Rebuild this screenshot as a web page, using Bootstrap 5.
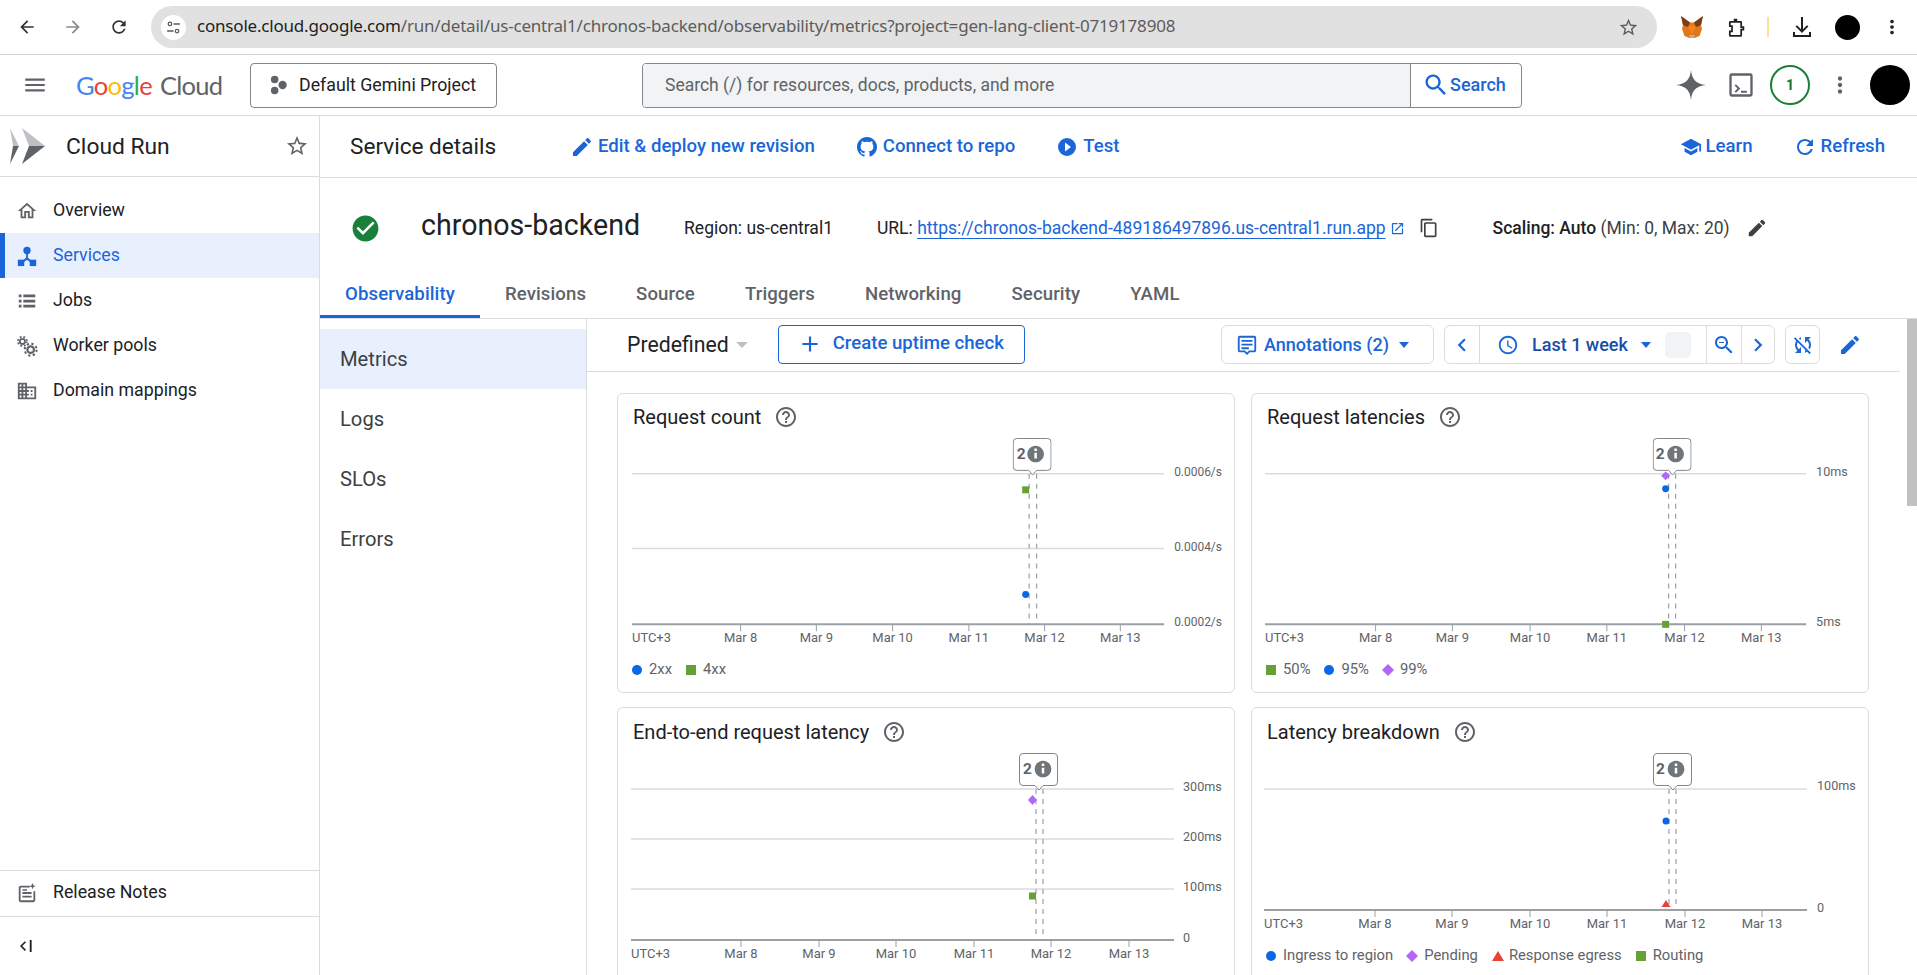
<!DOCTYPE html>
<html lang="en">
<head>
<meta charset="utf-8">
<title>chronos-backend – Cloud Run</title>
<link href="https://cdn.jsdelivr.net/npm/bootstrap@5.3.0/dist/css/bootstrap.min.css" rel="stylesheet">
<style>
html,body{height:975px;overflow:hidden;background:#fff}
body{font-family:Roboto,"Liberation Sans",sans-serif;color:#202124;font-size:17.75px;line-height:1.2}
.ico{display:block;flex:none;fill:currentColor}
.symbols{display:none}
.c-blue{color:#1a66d8}.c-gray{color:#5f6368}.c-dark{color:#3c4043}.c-green{color:#188038}
.browserbar{height:55px;border-bottom:1px solid #d3d3d3;padding-left:17px}
.bb-btn{width:20px;height:20px;margin-right:26px;color:#333}
.bb-btn.dim{color:#8a8a8a}
.omni{width:1506px;height:42px;margin-left:-4px;background:#e1e1e1;border-radius:21px;padding:0 18px 0 10px;font-family:"Noto Sans",sans-serif;font-size:17px;color:#5c5c5c}
.omni b{font-weight:400;color:#222}
.site-chip{width:25px;height:25px;border-radius:50%;background:#fff;margin-right:11px;flex:none}
.omni-url{flex:1;white-space:nowrap;letter-spacing:-.2px;position:relative;top:-1px}
.ext{margin-left:21px}
.ext-fox{margin-left:23px}
.ybar{width:2px;height:20px;background:#fde293;margin-left:21px}
.dot-av{width:25px;height:25px;border-radius:50%;background:#000}
.gc-head{height:61px;border-bottom:1px solid #dadce0;padding-left:22px}
.logo-t{width:166px;margin-left:28px;margin-right:-1px;font-family:Lato,"Open Sans",sans-serif;font-size:25.5px;letter-spacing:-.7px;white-space:nowrap}
.lg-b{color:#4285f4}.lg-r{color:#ea4335}.lg-y{color:#fbbc05}.lg-g{color:#34a853}
.lg-c{color:#5f6368;margin-left:8px;font-weight:400}
.proj{width:247px;height:45px;border:1px solid #80868b;border-radius:4px;margin-left:9px;padding:0 0 0 17px;color:#202124;font-size:17.75px;background:#fff;gap:11px}
.srch{width:880px;height:45px;margin-left:145px;border:1px solid #80868b;border-radius:4px;overflow:hidden}
.srch-in{width:768px;height:100%;background:#f1f3f4;border-right:1px solid #80868b;padding-left:22px;color:#5f6368;flex:none;font-size:17.5px}
.srch-b{flex:1;padding-left:11px;color:#1a66d8;font-weight:500;gap:0;font-size:18px}
.gc-r{margin-left:154px}
.ml-term{margin-left:21px}.ml-badge{margin-left:15px}.ml-more{margin-left:17px}
.badge1{width:40px;height:40px;border:2px solid #188038;border-radius:50%;color:#137333;font-size:14px;font-weight:700}
.avatar{width:40px;height:40px;border-radius:50%;background:#000}
.shell{height:859px}
.side{width:320px;border-right:1px solid #dadce0;flex:none}
.side-h{height:61px;border-bottom:1px solid #dadce0;padding:0 10px 0 9px}
.side-h h1{font-size:22.8px;font-weight:400;margin:0 0 0 21px;flex:1;line-height:1;position:relative;top:1px}
.side-nav{padding-top:11px}
.side-l{height:45px;padding:0 0 0 16px;color:#202124;gap:15px}
.side-l svg{color:#5f6368}
.side-l.on{background:#e8f0fe;color:#1a66d8;box-shadow:inset 5px 0 0 #1a66d8}
.side-l.on svg{color:#1a66d8}
.side-f{border-top:1px solid #dadce0;height:46px;padding:0 0 2px 16px;gap:15px}
.side-c{border-top:1px solid #dadce0;height:59px;padding-left:17px}
.mainw{min-width:0;flex:1}
.m-head{height:62px;border-bottom:1px solid #dadce0;padding:0 32px 0 30px}
.m-head h2{font-size:22.6px;font-weight:400;margin:0;width:220px}
.act{color:#1a66d8;font-weight:500;text-decoration:none;gap:4px;font-size:18.6px}
.act+.act{margin-left:40px}
.act.ms-auto{margin-left:auto}
.inf{height:92px;padding:8px 0 0 30px;font-size:17.5px}
.inf h3{font-size:28.6px;font-weight:400;margin:0 44px 0 40px;line-height:1;position:relative;top:-3px}
.url-w{margin-left:44px}
.scal{margin-left:54px}
.cp{margin-left:14px}
.url{color:#1a66d8;text-decoration:underline;text-underline-offset:4px}
.tabsx{height:49px;border-bottom:1px solid #dadce0;flex-wrap:nowrap}
.tabx{padding:0 25px;height:48px;color:#5f6368;font-weight:500;font-size:18.6px;letter-spacing:.1px;display:flex;align-items:center;border-radius:0}
.tabx.on{color:#1a66d8;box-shadow:inset 0 -3px 0 #1a66d8}
.bodyw{height:656px}
.subn{width:267px;border-right:1px solid #dadce0;padding-top:10px;flex:none}
.subl{height:60px;padding:0 20px;color:#3c4043;font-size:20.2px;display:flex;align-items:center}
.subl.on{background:#e8f0fe}
.met{width:1313px;flex:none}
.tbar{height:53px;border-bottom:1px solid #dadce0;padding:0 38px 1px 40px}
.pred{font-size:21.25px;color:#202124}
.caret-g{width:0;height:0;border:6px solid transparent;border-top:6px solid #bdc1c6;border-bottom:0;margin-left:7px}
.caret-b{width:0;height:0;border:5.5px solid transparent;border-top:6px solid #1a66d8;border-bottom:0}
.btn-up{width:247px;height:39px;border:1px solid #1a66d8;border-radius:4px;margin-left:30px;color:#1a66d8;font-weight:500;font-size:18.6px;padding:0 0 1px 18px;gap:10px;background:#fff}
.tb-box{height:39px;border:1px solid #dadce0;border-radius:6px;color:#1a66d8;background:#fff}
.tb-ann{width:213px;margin-left:auto;padding-left:14px;font-weight:500;gap:6px;font-size:18px}
.tb-grp{width:331px;margin-left:10px}
.tb-cell{height:100%;border-right:1px solid #dadce0}
.cw35{width:35px}
.cw227{width:227px;padding-left:17px}
.lastw{margin-left:13px;color:#174ea6;font-weight:500;font-size:18px}
.m-cb{margin-left:13px}
.gray-sq{width:26px;height:26px;border-radius:5px;background:#f1f3f4;margin-left:14px}
.tb-off{width:35px;margin-left:10px}
.tb-pen{margin-left:18px}
.grid2{display:grid;grid-template-columns:618px 618px;column-gap:16px;row-gap:14px;padding:21px 0 0 30px}
.chart{border:1px solid #dadce0;border-radius:6px;height:300px;width:618px;overflow:hidden}
.chart-t{height:42px;padding:5px 0 0 15px;font-size:20px;color:#202124;gap:13px}
.chart svg.plot{display:block;width:616px}
.chart text{font-family:Roboto,sans-serif;font-size:13px;fill:#5f6368}
.chart text.b2{font-size:15.5px;font-weight:700;fill:#5f6368}
.chart text.yl{font-size:12.6px}
.chart text.yr{font-size:12px}
.lgd{padding:0 0 0 14px;font-size:14.8px;color:#5f6368;height:44px;gap:4px}
.lgd span{margin-right:10px}
.mk{width:10px;height:10px;flex:none;margin-right:3px}
.m-c{border-radius:50%;background:#0b67e3}
.m-s{background:#65a135}
.m-d{background:#b366f5;transform:rotate(45deg) scale(.85)}
.m-t{width:0;height:0;border:6.5px solid transparent;border-bottom:10px solid #ea4335;border-top:0;flex:none;margin-right:1px}
.thumbw{flex:1;padding-left:7px}
.thumb{width:10px;height:187px;background:#c1c1c1}
</style>
</head>
<body>
<svg class="symbols" xmlns="http://www.w3.org/2000/svg">
<symbol id="i-back" viewBox="0 0 24 24"><path d="M20 11H7.83l5.59-5.59L12 4l-8 8 8 8 1.41-1.41L7.83 13H20v-2z"/></symbol>
<symbol id="i-fwd" viewBox="0 0 24 24"><path d="M12 4l-1.41 1.41L16.17 11H4v2h12.17l-5.58 5.59L12 20l8-8z"/></symbol>
<symbol id="i-reload" viewBox="0 0 24 24"><path d="M17.65 6.35C16.2 4.9 14.21 4 12 4c-4.42 0-7.99 3.58-7.99 8s3.57 8 7.99 8c3.73 0 6.84-2.55 7.73-6h-2.08c-.82 2.33-3.04 4-5.65 4-3.31 0-6-2.69-6-6s2.69-6 6-6c1.66 0 3.14.69 4.22 1.78L13 11h7V4l-2.35 2.35z"/></symbol>
<symbol id="i-star" viewBox="0 0 24 24"><path d="M22 9.24l-7.19-.62L12 2 9.19 8.63 2 9.24l5.46 4.73L5.82 21 12 17.27 18.18 21l-1.63-7.03L22 9.24zM12 15.4l-3.76 2.27 1-4.28-3.32-2.88 4.38-.38L12 6.1l1.71 4.04 4.38.38-3.32 2.88 1 4.28L12 15.4z"/></symbol>
<symbol id="i-menu" viewBox="0 0 24 24"><path d="M3 18h18v-2H3v2zm0-5h18v-2H3v2zm0-7v2h18V6H3z"/></symbol>
<symbol id="i-search" viewBox="0 0 24 24"><path d="M15.5 14h-.79l-.28-.27C15.41 12.59 16 11.11 16 9.5 16 5.91 13.09 3 9.5 3S3 5.91 3 9.5 5.91 16 9.5 16c1.61 0 3.09-.59 4.23-1.57l.27.28v.79l5 4.99L20.49 19l-4.99-5zm-6 0C7.01 14 5 11.99 5 9.5S7.01 5 9.5 5 14 7.01 14 9.5 11.99 14 9.5 14z"/></symbol>
<symbol id="i-more" viewBox="0 0 24 24"><path d="M12 8c1.1 0 2-.9 2-2s-.9-2-2-2-2 .9-2 2 .9 2 2 2zm0 2c-1.1 0-2 .9-2 2s.9 2 2 2 2-.9 2-2-.9-2-2-2zm0 6c-1.1 0-2 .9-2 2s.9 2 2 2 2-.9 2-2-.9-2-2-2z"/></symbol>
<symbol id="i-edit" viewBox="0 0 24 24"><path d="M3 17.25V21h3.75L17.81 9.94l-3.75-3.75L3 17.25zM20.71 7.04c.39-.39.39-1.02 0-1.41l-2.34-2.34c-.39-.39-1.02-.39-1.41 0l-1.83 1.83 3.75 3.75 1.83-1.83z"/></symbol>
<symbol id="i-gh" viewBox="0 0 24 24"><path d="M12 2C6.48 2 2 6.48 2 12c0 4.42 2.87 8.17 6.84 9.5.5.08.66-.23.66-.5v-1.69c-2.77.6-3.36-1.34-3.36-1.34-.46-1.16-1.11-1.47-1.11-1.47-.91-.62.07-.6.07-.6 1 .07 1.53 1.03 1.53 1.03.87 1.52 2.34 1.07 2.91.83.09-.65.35-1.09.63-1.34-2.22-.25-4.55-1.11-4.55-4.92 0-1.11.38-2 1.03-2.71-.1-.25-.45-1.29.1-2.64 0 0 .84-.27 2.75 1.02.79-.22 1.65-.33 2.5-.33s1.71.11 2.5.33c1.91-1.29 2.75-1.02 2.75-1.02.55 1.35.2 2.39.1 2.64.65.71 1.03 1.6 1.03 2.71 0 3.82-2.34 4.66-4.57 4.91.36.31.69.92.69 1.85V21c0 .27.16.59.67.5C19.14 20.16 22 16.42 22 12c0-5.52-4.48-10-10-10z"/></symbol>
<symbol id="i-play" viewBox="0 0 24 24"><path d="M12 3a9 9 0 100 18 9 9 0 000-18zm-2 13.500v-9l6 4.500-6 4.500z"/></symbol>
<symbol id="i-learn" viewBox="0 0 24 24"><path d="M5 13.18v4L12 21l7-3.82v-4L12 17l-7-3.82zM12 3L1 9l11 6 9-4.91V17h2V9L12 3z"/></symbol>
<symbol id="i-home" viewBox="0 0 24 24"><path d="M12 5.69l5 4.5V18h-2v-6H9v6H7v-7.81l5-4.5M12 3L2 12h3v8h6v-6h2v6h6v-8h3L12 3z"/></symbol>
<symbol id="i-svc" viewBox="0 0 24 24"><circle cx="12" cy="6" r="4"/><rect x="2" y="16" width="7" height="7"/><rect x="15" y="16" width="7" height="7"/><path d="M11 9h2v5l5 4-1.3 1.6L12 16l-4.7 3.6L6 18l5-4z"/></symbol>
<symbol id="i-jobs" viewBox="0 0 24 24"><path d="M3 5h3v3H3zM8 5h13v3H8zM3 10.500h3v3H3zM8 10.500h13v3H8zM3 16h3v3H3zM8 16h13v3H8z"/></symbol>
<symbol id="i-gears" viewBox="0 0 24 24"><circle cx="7" cy="7" r="2.800" fill="none" stroke="currentColor" stroke-width="2"/><circle cx="7" cy="7" r="5" fill="none" stroke="currentColor" stroke-width="1.800" stroke-dasharray="2 2"/><circle cx="16" cy="16" r="3.600" fill="none" stroke="currentColor" stroke-width="2.400"/><circle cx="16" cy="16" r="6.500" fill="none" stroke="currentColor" stroke-width="2.200" stroke-dasharray="2.500 2.600"/></symbol>
<symbol id="i-dom" viewBox="0 0 24 24"><path d="M12 7V3H2v18h20V7H12zM6 19H4v-2h2v2zm0-4H4v-2h2v2zm0-4H4V9h2v2zm0-4H4V5h2v2zm4 12H8v-2h2v2zm0-4H8v-2h2v2zm0-4H8V9h2v2zm0-4H8V5h2v2zm10 12h-8v-2h2v-2h-2v-2h2v-2h-2V9h8v10zm-2-8h-2v2h2v-2zm0 4h-2v2h2v-2z"/></symbol>
<symbol id="i-check" viewBox="0 0 24 24"><path d="M12 2C6.48 2 2 6.48 2 12s4.48 10 10 10 10-4.48 10-10S17.52 2 12 2zm-2 15l-5-5 1.41-1.41L10 14.17l7.59-7.59L19 8l-9 9z"/></symbol>
<symbol id="i-open" viewBox="0 0 24 24"><path d="M19 19H5V5h7V3H5c-1.11 0-2 .9-2 2v14c0 1.1.89 2 2 2h14c1.1 0 2-.9 2-2v-7h-2v7zM14 3v2h3.590l-9.830 9.830 1.410 1.410L19 6.410V10h2V3h-7z"/></symbol>
<symbol id="i-copy" viewBox="0 0 24 24"><path d="M16 1H4c-1.100 0-2 .9-2 2v14h2V3h12V1zm3 4H8c-1.100 0-2 .9-2 2v14c0 1.100.9 2 2 2h11c1.100 0 2-.9 2-2V7c0-1.100-.9-2-2-2zm0 16H8V7h11v14z"/></symbol>
<symbol id="i-help" viewBox="0 0 24 24"><path d="M11 18h2v-2h-2v2zm1-16C6.480 2 2 6.480 2 12s4.480 10 10 10 10-4.480 10-10S17.520 2 12 2zm0 18c-4.410 0-8-3.590-8-8s3.590-8 8-8 8 3.590 8 8-3.590 8-8 8zm0-14c-2.210 0-4 1.790-4 4h2c0-1.100.9-2 2-2s2 .9 2 2c0 2-3 1.750-3 5h2c0-2.250 3-2.500 3-5 0-2.210-1.790-4-4-4z"/></symbol>
<symbol id="i-info" viewBox="0 0 24 24"><path fill-rule="evenodd" d="M12 2C6.480 2 2 6.480 2 12s4.480 10 10 10 10-4.480 10-10S17.520 2 12 2zm1.500 15.500h-3v-7h3v7zm0-9h-3v-3h3v3z"/></symbol>
<symbol id="i-clock" viewBox="0 0 24 24"><path d="M11.990 2C6.470 2 2 6.480 2 12s4.470 10 9.990 10C17.520 22 22 17.520 22 12S17.520 2 11.990 2zM12 20c-4.420 0-8-3.580-8-8s3.580-8 8-8 8 3.580 8 8-3.580 8-8 8zm.5-13H11v6l5.250 3.150.75-1.230-4.500-2.670z"/></symbol>
<symbol id="i-zoomo" viewBox="0 0 24 24"><path d="M15.500 14h-.79l-.28-.27C15.410 12.590 16 11.110 16 9.500 16 5.910 13.090 3 9.500 3S3 5.910 3 9.500 5.910 16 9.500 16c1.610 0 3.090-.59 4.230-1.570l.27.28v.79l5 4.990L20.490 19l-4.990-5zm-6 0C7.010 14 5 11.990 5 9.500S7.010 5 9.500 5 14 7.010 14 9.500 11.990 14 9.500 14zM7 9h5v1H7z"/></symbol>
<symbol id="i-left" viewBox="0 0 24 24"><path d="M15.410 7.410L14 6l-6 6 6 6 1.410-1.410L10.830 12z"/></symbol>
<symbol id="i-right" viewBox="0 0 24 24"><path d="M10 6L8.590 7.410 13.170 12l-4.580 4.590L10 18l6-6z"/></symbol>
<symbol id="i-add" viewBox="0 0 24 24"><path d="M19 13h-6v6h-2v-6H5v-2h6V5h2v6h6v2z"/></symbol>
<symbol id="i-syncoff" viewBox="0 0 24 24"><path d="M10 6.350V4.260c-.8.21-1.550.54-2.230.96l1.460 1.460c.25-.12.5-.24.77-.33zm-7.140-.94l2.360 2.360C4.450 8.990 4 10.440 4 12c0 2.210.91 4.200 2.360 5.640L4 20h6v-6l-2.240 2.240C6.680 15.150 6 13.660 6 12c0-1 .25-1.940.68-2.770l8.080 8.080c-.25.13-.5.25-.77.34v2.090c.8-.21 1.550-.54 2.230-.96l2.360 2.360 1.270-1.270L4.140 4.140 2.860 5.410zM20 4h-6v6l2.240-2.240C17.320 8.850 18 10.340 18 12c0 1-.25 1.940-.68 2.770l1.460 1.460C19.550 15.010 20 13.560 20 12c0-2.210-.91-4.200-2.360-5.640L20 4z"/></symbol>
<symbol id="i-ann" viewBox="0 0 24 24"><path d="M4 2h16a2 2 0 012 2v14a2 2 0 01-2 2h-5l-3 3-3-3H4a2 2 0 01-2-2V4a2 2 0 012-2zm0 2v14h5.800l2.200 2.200 2.200-2.200H20V4H4zm2 2.500h12v2H6zm0 4h12v2H6zm0 4h8v2H6z"/></symbol>
<symbol id="i-term" viewBox="0 0 24 24"><path d="M4 2h16a2 2 0 012 2v16a2 2 0 01-2 2H4a2 2 0 01-2-2V4a2 2 0 012-2zm0 2v16h16V4H4zm2.500 8.500l1.200-1.200 3.700 3.700-3.700 3.700-1.200-1.200 2.500-2.500zM12 17h5v1.700h-5z"/></symbol>
<symbol id="i-spark" viewBox="0 0 24 24"><path d="M12 0C12.700 7.500 16 11.200 24 12 16 12.800 12.700 16.500 12 24 11.300 16.500 8 12.800 0 12 8 11.200 11.300 7.500 12 0z"/></symbol>
<symbol id="i-puzzle" viewBox="0 0 24 24"><path d="M10 2h4v2.500h4a1.500 1.500 0 011.500 1.500v4.500H22v5h-2.500V21a1.500 1.500 0 01-1.500 1.500H6A1.500 1.500 0 014.500 21v-5.500H7v-4H4.500V6A1.500 1.500 0 016 4.500h4zm-3.500 4.500v3h2.500v8H6.500v3h11v-7H20v-1h-2.500v-6z"/></symbol>
<symbol id="i-dl" viewBox="0 0 24 24"><path d="M11 2h2v12.200l4-4 1.400 1.400L12 18l-6.400-6.400L7 10.200l4 4zM3 17h2v3h14v-3h2v5H3z"/></symbol>
<symbol id="i-notes" viewBox="0 0 24 24"><path d="M5 4h10v2H5v14h14V10h2v10a2 2 0 01-2 2H5a2 2 0 01-2-2V6a2 2 0 012-2zm2 7h10v2H7zm0 4h10v2H7zm0-7h5v1.500H7zM18 1l1 2.500 2.500 1-2.500 1L18 8l-1-2.500-2.500-1 2.500-1z"/></symbol>
<symbol id="i-coll" viewBox="0 0 24 24"><path d="M10.500 5.500L12 7l-5 5 5 5-1.500 1.500L4 12zM17 4h2.500v16H17z"/></symbol>
<symbol id="i-tune" viewBox="0 0 24 24"><circle cx="7" cy="7" r="2.500" fill="none" stroke="currentColor" stroke-width="1.800"/><path d="M12 6h9v2h-9zM3 16h9v2H3z"/><circle cx="17" cy="17" r="2.500" fill="none" stroke="currentColor" stroke-width="1.800"/></symbol>
<symbol id="i-proj" viewBox="0 0 24 24"><circle cx="8" cy="5.500" r="4.500"/><circle cx="8" cy="18.500" r="4.500"/><circle cx="17.500" cy="12" r="5"/></symbol>
<symbol id="i-fox" viewBox="0 0 24 24"><path fill="#e2761b" d="M1 1l9 6.500h4L23 1l-2 9 1 4-2.500 7-5 2h-5l-5-2L2 14l1-4z"/><path fill="#763d16" d="M1 1l9 6.500L8 12l-5-2zM23 1l-9 6.500 2 4.500 5-2z"/><path fill="#f6851b" d="M8 12l4 7 4-7-4-2z"/><path fill="#c0ad9e" d="M9 20h6l-1 3h-4z"/></symbol>
<symbol id="i-bub" viewBox="0 0 39 38"><path d="M4 .5H35A3.500 3.500 0 0138.500 4V29A3.500 3.500 0 0135 32.500H24L20 37 16 32.500H4A3.500 3.500 0 01.5 29V4A3.500 3.500 0 014 .5z" fill="#fff" stroke="#80868b"/></symbol>
</svg>

<header class="browserbar d-flex align-items-center">
  <svg class="ico bb-btn" aria-hidden="true"><use href="#i-back"/></svg>
  <svg class="ico bb-btn dim" aria-hidden="true"><use href="#i-fwd"/></svg>
  <svg class="ico bb-btn" aria-hidden="true"><use href="#i-reload"/></svg>
  <div class="omni d-flex align-items-center">
    <span class="site-chip d-flex align-items-center justify-content-center"><svg class="ico" width="17" height="17" aria-hidden="true"><use href="#i-tune"/></svg></span>
    <span class="omni-url"><b>console.cloud.google.com</b>/run/detail/us-central1/chronos-backend/observability/metrics?project=gen-lang-client-0719178908</span>
    <svg class="ico" width="21" height="21" aria-hidden="true"><use href="#i-star"/></svg>
  </div>
  <svg class="ico ext-fox" width="24" height="24" aria-hidden="true"><use href="#i-fox"/></svg>
  <svg class="ico ext" width="21" height="21" aria-hidden="true"><use href="#i-puzzle"/></svg>
  <span class="ybar"></span>
  <svg class="ico ext" width="24" height="24" aria-hidden="true"><use href="#i-dl"/></svg>
  <span class="dot-av ext"></span>
  <svg class="ico ext" width="22" height="22" aria-hidden="true"><use href="#i-more"/></svg>
</header>

<header class="gc-head d-flex align-items-center">
  <svg class="ico c-gray" width="26" height="26" aria-hidden="true"><use href="#i-menu"/></svg>
  <div class="logo-t"><span class="lg-b">G</span><span class="lg-r">o</span><span class="lg-y">o</span><span class="lg-b">g</span><span class="lg-g">l</span><span class="lg-r">e</span><span class="lg-c">Cloud</span></div>
  <button type="button" class="btn proj d-flex align-items-center"><svg class="ico c-gray" width="20" height="20" aria-hidden="true"><use href="#i-proj"/></svg>Default Gemini Project</button>
  <div class="srch d-flex align-items-center">
    <div class="srch-in d-flex align-items-center">Search (/) for resources, docs, products, and more</div>
    <div class="srch-b d-flex align-items-center"><svg class="ico" width="28" height="28" aria-hidden="true"><use href="#i-search"/></svg>Search</div>
  </div>
  <div class="gc-r d-flex align-items-center">
    <svg class="ico c-gray" width="30" height="30" aria-hidden="true"><use href="#i-spark"/></svg>
    <svg class="ico c-gray ml-term" width="28" height="28" aria-hidden="true"><use href="#i-term"/></svg>
    <span class="badge1 d-flex align-items-center justify-content-center ml-badge">1</span>
    <svg class="ico c-gray ml-more" width="26" height="26" aria-hidden="true"><use href="#i-more"/></svg>
    <span class="avatar ml-more"></span>
  </div>
</header>

<div class="shell d-flex">
  <aside class="side d-flex flex-column">
    <div class="side-h d-flex align-items-center">
      <svg class="ico" width="36" height="36" viewBox="0 0 36 36" aria-hidden="true"><path fill="#bdc1c6" d="M1 0l9 18H4z"/><path fill="#5f6368" d="M1 36l9-18H4z"/><path fill="#bdc1c6" d="M13 0l23 18H20z"/><path fill="#5f6368" d="M13 36l23-18H20z"/></svg>
      <h1>Cloud Run</h1>
      <svg class="ico c-gray" width="24" height="24" aria-hidden="true"><use href="#i-star"/></svg>
    </div>
    <nav class="nav flex-column side-nav flex-grow-1">
      <a class="nav-link side-l d-flex align-items-center" href="#"><svg class="ico" width="22" height="22" aria-hidden="true"><use href="#i-home"/></svg>Overview</a>
      <a class="nav-link side-l on d-flex align-items-center" href="#"><svg class="ico" width="22" height="22" aria-hidden="true"><use href="#i-svc"/></svg>Services</a>
      <a class="nav-link side-l d-flex align-items-center" href="#"><svg class="ico" width="22" height="22" aria-hidden="true"><use href="#i-jobs"/></svg>Jobs</a>
      <a class="nav-link side-l d-flex align-items-center" href="#"><svg class="ico" width="22" height="22" aria-hidden="true"><use href="#i-gears"/></svg>Worker pools</a>
      <a class="nav-link side-l d-flex align-items-center" href="#"><svg class="ico" width="22" height="22" aria-hidden="true"><use href="#i-dom"/></svg>Domain mappings</a>
    </nav>
    <div class="side-f d-flex align-items-center"><svg class="ico c-gray" width="22" height="22" aria-hidden="true"><use href="#i-notes"/></svg>Release Notes</div>
    <div class="side-c d-flex align-items-center"><svg class="ico" width="18" height="18" aria-hidden="true"><use href="#i-coll"/></svg></div>
  </aside>

  <main class="mainw">
    <div class="m-head d-flex align-items-center">
      <h2>Service details</h2>
      <a class="act d-flex align-items-center" href="#"><svg class="ico" width="24" height="24" aria-hidden="true"><use href="#i-edit"/></svg>Edit &amp; deploy new revision</a>
      <a class="act d-flex align-items-center" href="#"><svg class="ico" width="24" height="24" aria-hidden="true"><use href="#i-gh"/></svg>Connect to repo</a>
      <a class="act d-flex align-items-center" href="#"><svg class="ico" width="24" height="24" aria-hidden="true"><use href="#i-play"/></svg>Test</a>
      <a class="act d-flex align-items-center ms-auto" href="#"><svg class="ico" width="22" height="22" aria-hidden="true"><use href="#i-learn"/></svg>Learn</a>
      <a class="act d-flex align-items-center" href="#"><svg class="ico" width="24" height="24" aria-hidden="true"><use href="#i-reload"/></svg>Refresh</a>
    </div>
    <div class="inf d-flex align-items-center">
      <svg class="ico c-green" width="31" height="31" aria-hidden="true"><use href="#i-check"/></svg>
      <h3>chronos-backend</h3>
      <span>Region: us-central1</span>
      <span class="url-w d-flex align-items-center">URL:&nbsp;<a class="url" href="#">https://chronos-backend-489186497896.us-central1.run.app</a><svg class="ico c-blue ms-1" width="15" height="15" aria-hidden="true"><use href="#i-open"/></svg></span>
      <svg class="ico cp c-dark" width="20" height="20" aria-hidden="true"><use href="#i-copy"/></svg>
      <span class="scal"><span class="fw-medium">Scaling: Auto</span> <span class="c-dark">(Min: 0, Max: 20)</span></span>
      <svg class="ico ms-3 c-dark" width="22" height="22" aria-hidden="true"><use href="#i-edit"/></svg>
    </div>
    <nav class="nav tabsx">
      <a class="nav-link tabx on" href="#">Observability</a>
      <a class="nav-link tabx" href="#">Revisions</a>
      <a class="nav-link tabx" href="#">Source</a>
      <a class="nav-link tabx" href="#">Triggers</a>
      <a class="nav-link tabx" href="#">Networking</a>
      <a class="nav-link tabx" href="#">Security</a>
      <a class="nav-link tabx" href="#">YAML</a>
    </nav>
    <div class="bodyw d-flex">
      <nav class="subn nav flex-column">
        <a class="nav-link subl on" href="#">Metrics</a>
        <a class="nav-link subl" href="#">Logs</a>
        <a class="nav-link subl" href="#">SLOs</a>
        <a class="nav-link subl" href="#">Errors</a>
      </nav>
      <section class="met">
        <div class="tbar d-flex align-items-center">
          <span class="pred">Predefined</span><span class="caret-g"></span>
          <button type="button" class="btn btn-up d-flex align-items-center"><svg class="ico" width="26" height="26" aria-hidden="true"><use href="#i-add"/></svg>Create uptime check</button>
          <div class="tb-box tb-ann d-flex align-items-center"><svg class="ico" width="22" height="22" aria-hidden="true"><use href="#i-ann"/></svg>Annotations (2)<span class="caret-b ms-1"></span></div>
          <div class="tb-box tb-grp d-flex align-items-center">
            <div class="tb-cell cw35 d-flex align-items-center justify-content-center"><svg class="ico" width="26" height="26" aria-hidden="true"><use href="#i-left"/></svg></div>
            <div class="tb-cell cw227 d-flex align-items-center"><svg class="ico" width="22" height="22" aria-hidden="true"><use href="#i-clock"/></svg><span class="lastw">Last 1 week</span><span class="caret-b m-cb"></span><span class="gray-sq"></span></div>
            <div class="tb-cell cw35 d-flex align-items-center justify-content-center"><svg class="ico" width="24" height="24" aria-hidden="true"><use href="#i-zoomo"/></svg></div>
            <div class="d-flex align-items-center justify-content-center flex-grow-1"><svg class="ico" width="26" height="26" aria-hidden="true"><use href="#i-right"/></svg></div>
          </div>
          <div class="tb-box tb-off d-flex align-items-center justify-content-center"><svg class="ico" width="24" height="24" aria-hidden="true"><use href="#i-syncoff"/></svg></div>
          <svg class="ico c-blue tb-pen" width="24" height="24" aria-hidden="true"><use href="#i-edit"/></svg>
        </div>
        <div class="grid2">

          <article class="card chart">
            <div class="chart-t d-flex align-items-center"><span>Request count</span><svg class="ico c-gray" width="24" height="24" aria-hidden="true"><use href="#i-help"/></svg></div>
            <svg class="plot" viewBox="0 0 616 213" height="213">
              <path d="M13 38H547M13 113H547" stroke="#dadce0" stroke-width="1.500"/>
              <path d="M13 189H547" stroke="#9aa0a6" stroke-width="2"/>
              <path d="M122 189v7M198 189v7M274.500 189v7M351 189v7M427 189v7M503 189v7" stroke="#9aa0a6"/>
              <path d="M411.500 38V189M419 38V189" stroke="#9aa0a6" stroke-dasharray="5 5" stroke-width="1.200"/>
              <rect x="404.500" y="50.500" width="7" height="7" fill="#65a135"/><circle cx="408" cy="159" r="3.500" fill="#0b67e3"/>
              <use href="#i-bub" x="395" y="2" width="39" height="38"/><text class="b2" x="399" y="23">2</text><use href="#i-info" x="408" y="8" width="20" height="20" fill="#70757a"/>
              <text class="yr" x="557" y="40">0.0006/s</text><text class="yr" x="557" y="115">0.0004/s</text><text class="yr" x="557" y="191">0.0002/s</text>
              <text x="13" y="207">UTC+3</text><g text-anchor="middle"><text x="122" y="207">Mar 8</text><text x="198" y="207">Mar 9</text><text x="274.500" y="207">Mar 10</text><text x="351" y="207">Mar 11</text><text x="427" y="207">Mar 12</text><text x="503" y="207">Mar 13</text></g>
            </svg>
            <div class="lgd d-flex align-items-center"><i class="mk m-c"></i><span>2xx</span><i class="mk m-s"></i><span>4xx</span></div>
          </article>

          <article class="card chart">
            <div class="chart-t d-flex align-items-center"><span>Request latencies</span><svg class="ico c-gray" width="24" height="24" aria-hidden="true"><use href="#i-help"/></svg></div>
            <svg class="plot" viewBox="0 0 616 213" height="213">
              <path d="M12 38H555" stroke="#dadce0" stroke-width="1.500"/>
              <path d="M12 189H555" stroke="#9aa0a6" stroke-width="2"/>
              <path d="M123 189v7M200 189v7M278 189v7M355 189v7M433 189v7M510 189v7" stroke="#9aa0a6"/>
              <path d="M417 38V189M424 38V189" stroke="#9aa0a6" stroke-dasharray="5 5" stroke-width="1.200"/>
              <use href="#i-bub" x="401" y="2" width="39" height="38"/><text class="b2" x="404" y="23">2</text><use href="#i-info" x="414" y="8" width="20" height="20" fill="#70757a"/>
              <path d="M414 35.500l4.500 4.500-4.500 4.500-4.500-4.500z" fill="#b366f5"/><circle cx="414" cy="53" r="3.500" fill="#0b67e3"/><rect x="410.500" y="185.500" width="7" height="7" fill="#65a135"/>
              <text class="yl" x="565" y="40">10ms</text><text class="yl" x="565" y="191">5ms</text>
              <text x="12" y="207">UTC+3</text><g text-anchor="middle"><text x="123" y="207">Mar 8</text><text x="200" y="207">Mar 9</text><text x="278" y="207">Mar 10</text><text x="355" y="207">Mar 11</text><text x="433" y="207">Mar 12</text><text x="510" y="207">Mar 13</text></g>
            </svg>
            <div class="lgd d-flex align-items-center"><i class="mk m-s"></i><span>50%</span><i class="mk m-c"></i><span>95%</span><i class="mk m-d"></i><span>99%</span></div>
          </article>

          <article class="card chart">
            <div class="chart-t d-flex align-items-center"><span>End-to-end request latency</span><svg class="ico c-gray" width="24" height="24" aria-hidden="true"><use href="#i-help"/></svg></div>
            <svg class="plot" viewBox="0 0 616 212" height="212">
              <path d="M13 39H556M13 89H556M13 139H556" stroke="#dadce0" stroke-width="1.500"/>
              <path d="M13 190H556" stroke="#9aa0a6" stroke-width="2"/>
              <path d="M123 190v7M201 190v7M278 190v7M356 190v7M433 190v7M511 190v7" stroke="#9aa0a6"/>
              <path d="M418 39V190M425 39V190" stroke="#9aa0a6" stroke-dasharray="5 5" stroke-width="1.200"/>
              <use href="#i-bub" x="401" y="3" width="39" height="38"/><text class="b2" x="405" y="24">2</text><use href="#i-info" x="415" y="9" width="20" height="20" fill="#70757a"/>
              <path d="M414.500 45l4.500 5-4.500 5-4.500-5z" fill="#b366f5"/><rect x="411" y="142.500" width="7" height="7" fill="#65a135"/>
              <text class="yl" x="565" y="41">300ms</text><text class="yl" x="565" y="91">200ms</text><text class="yl" x="565" y="141">100ms</text><text class="yl" x="565" y="192">0</text>
              <text x="13" y="208">UTC+3</text><g text-anchor="middle"><text x="123" y="208">Mar 8</text><text x="201" y="208">Mar 9</text><text x="278" y="208">Mar 10</text><text x="356" y="208">Mar 11</text><text x="433" y="208">Mar 12</text><text x="511" y="208">Mar 13</text></g>
            </svg>
          </article>

          <article class="card chart">
            <div class="chart-t d-flex align-items-center"><span>Latency breakdown</span><svg class="ico c-gray" width="24" height="24" aria-hidden="true"><use href="#i-help"/></svg></div>
            <svg class="plot" viewBox="0 0 616 184" height="184">
              <path d="M12 39H555" stroke="#dadce0" stroke-width="1.500"/>
              <path d="M12 160H555" stroke="#9aa0a6" stroke-width="2"/>
              <path d="M123 160v7M200 160v7M278 160v7M355 160v7M433 160v7M510 160v7" stroke="#9aa0a6"/>
              <path d="M417 39V160M424 39V160" stroke="#9aa0a6" stroke-dasharray="5 5" stroke-width="1.200"/>
              <use href="#i-bub" x="401" y="3" width="39" height="38"/><text class="b2" x="404" y="24">2</text><use href="#i-info" x="414" y="9" width="20" height="20" fill="#70757a"/>
              <circle cx="414" cy="71" r="3.500" fill="#0b67e3"/><path d="M414 150l4.500 7h-9z" fill="#ea4335"/>
              <text class="yl" x="565" y="40">100ms</text><text class="yl" x="565" y="162">0</text>
              <text x="12" y="178">UTC+3</text><g text-anchor="middle"><text x="123" y="178">Mar 8</text><text x="200" y="178">Mar 9</text><text x="278" y="178">Mar 10</text><text x="355" y="178">Mar 11</text><text x="433" y="178">Mar 12</text><text x="510" y="178">Mar 13</text></g>
            </svg>
            <div class="lgd d-flex align-items-center"><i class="mk m-c"></i><span>Ingress to region</span><i class="mk m-d"></i><span>Pending</span><i class="m-t"></i><span>Response egress</span><i class="mk m-s"></i><span>Routing</span></div>
          </article>
        </div>
      </section>
      <div class="thumbw"><div class="thumb"></div></div>
    </div>
  </main>
</div>
<script src="https://cdn.jsdelivr.net/npm/bootstrap@5.3.0/dist/js/bootstrap.bundle.min.js"></script>
</body>
</html>
